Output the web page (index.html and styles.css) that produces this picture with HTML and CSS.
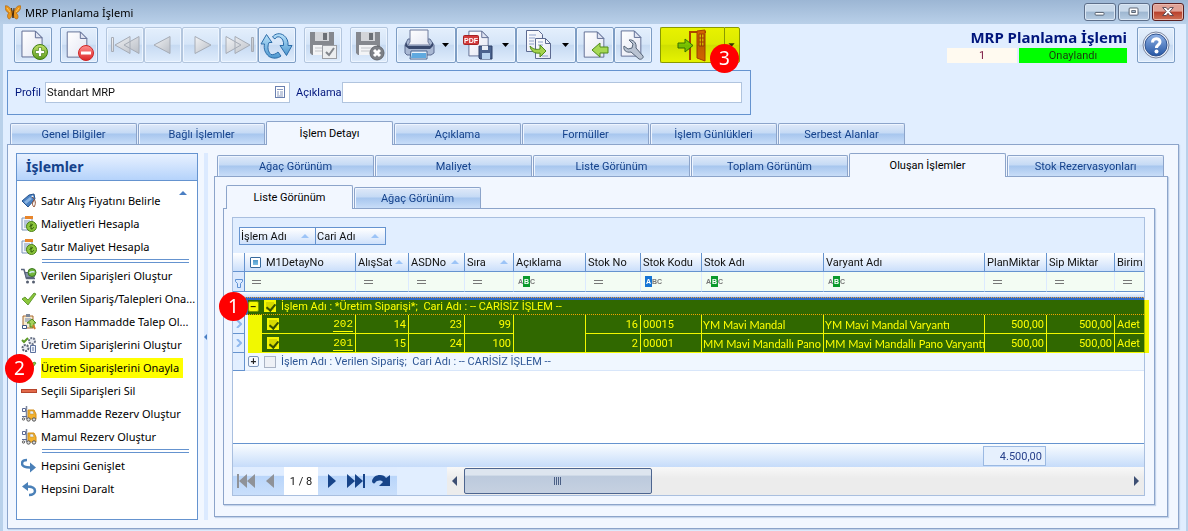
FILE: index.html
```html
<!DOCTYPE html>
<html lang="tr">
<head>
<meta charset="utf-8">
<title>MRP Planlama İşlemi</title>
<link rel="stylesheet" href="styles.css">
</head>
<body>
<svg class="defs" aria-hidden="true">
  <defs>
    <linearGradient id="gGreen" x1="0" y1="0" x2="0" y2="1"><stop offset="0" stop-color="#c3e26a"/><stop offset="1" stop-color="#5c9a1c"/></linearGradient>
    <linearGradient id="gRed" x1="0" y1="0" x2="0" y2="1"><stop offset="0" stop-color="#ff8f8f"/><stop offset="1" stop-color="#dd2525"/></linearGradient>
    <linearGradient id="gGray" x1="0" y1="0" x2="1" y2="1"><stop offset="0" stop-color="#f2f3f5"/><stop offset="1" stop-color="#b9bec6"/></linearGradient>
    <linearGradient id="gPage" x1="0" y1="0" x2="1" y2="1"><stop offset="0" stop-color="#ffffff"/><stop offset="1" stop-color="#e3e6f3"/></linearGradient>
    <linearGradient id="gBlue" x1="0" y1="0" x2="0" y2="1"><stop offset="0" stop-color="#b9e2fa"/><stop offset="1" stop-color="#4d97cf"/></linearGradient>
    <linearGradient id="gHelp" x1="0" y1="0" x2="0" y2="1"><stop offset="0" stop-color="#8fb2e6"/><stop offset="1" stop-color="#2556a4"/></linearGradient>
    <symbol id="page" viewBox="0 0 24 30"><path d="M1 1h14l7 7v20H1z" fill="url(#gPage)" stroke="#5c6a91"/><path d="M15 1v7h7z" fill="#dfe4f2" stroke="#5c6a91" stroke-linejoin="round"/></symbol>
    <symbol id="floppy" viewBox="0 0 30 30"><path d="M1 2h24v23H3l-2-2z" fill="#85888e"/><path d="M6 2h14v9H6z" fill="#d3d5d9"/><path d="M14 3h4v7h-4z" fill="#6c7076"/><path d="M4 15h18v10H4z" fill="#f3f4f6"/><path d="M6 18h14M6 21h14" stroke="#c2c5ca"/></symbol>
    <symbol id="money" viewBox="0 0 16 16"><path d="M1 2h10v12H1z" fill="#f4f7fc" stroke="#7d93b8"/><path d="M4 0h8v3H4z" fill="#e8862c"/><path d="M3 5h6M3 7h5M3 9h4M3 11h3" stroke="#7d93b8"/><circle cx="10.500" cy="10.500" r="5" fill="#8cc63c" stroke="#4b7f14"/><path d="M10 7.500v5.500c2 0 2.500-1 2.500-2M8.500 10.500l3.500-2" fill="none" stroke="#2f5a08"/></symbol>
    <symbol id="truck" viewBox="0 0 16 16"><path d="M7 4h6l2 4v5H7z" fill="#f3b22e" stroke="#d28d18"/><path d="M9 5h3l1 3H9z" fill="#e8f2fc" stroke="#b98a2a" stroke-width=".5"/><path d="M5.500 0v13" stroke="#7f889c" stroke-width="1.500"/><path d="M1.500 2.500h3v3h-3zM1 10.500h5" fill="#fff" stroke="#5c6a94"/><circle cx="7.500" cy="13.500" r="1.700" fill="#ddd" stroke="#555"/><circle cx="13" cy="13.500" r="1.700" fill="#ddd" stroke="#555"/><circle cx="2.500" cy="13" r="1.200" fill="#ddd" stroke="#666"/></symbol>
    <symbol id="check" viewBox="0 0 16 16"><path d="M1 8l3-2 3 3 6-7 2 1-8 11z" fill="#8cc63c" stroke="#4e8a1d" stroke-width=".8"/></symbol>
  </defs>
</svg>

<header class="titlebar">
  <svg class="logo" viewBox="0 0 16 15"><path d="M7 6C5 2 2 0 0 1c0 3 1 6 4 7-2 1-2 5 0 6 2 0 3-4 3.500-6C8 10 9 14 12 14c2-1 1-5-1-6 3-1 5-4 5-7-3-1-5 1-7 5z" fill="#e8951c" stroke="#a65f0d" stroke-width=".6"/><path d="M6.500 3l1.500 10 1-10" fill="none" stroke="#43280c"/><path d="M2 3l3 4M14 3l-3 4" stroke="#ffc857"/></svg>
  <h1 class="titlebar-text">MRP Planlama İşlemi</h1>
  <div class="win-buttons">
    <button class="win" aria-label="Küçült"><svg viewBox="0 0 32 18"><rect x="10.500" y="9.500" width="10" height="3" rx="1" fill="#fff" stroke="#4b5563"/></svg></button>
    <button class="win" aria-label="Büyüt"><svg viewBox="0 0 32 18"><rect x="10.500" y="4.500" width="10" height="8" rx="1" fill="#fff" stroke="#4b5563"/><rect x="13.500" y="7.500" width="4" height="2" fill="#b7c9df" stroke="#4b5563"/></svg></button>
    <button class="win win-close" aria-label="Kapat"><svg viewBox="0 0 32 18"><path d="M10 4h4l2 2.500L18 4h4l-4 4.500 4 4.500h-4l-2-2.500-2 2.500h-4l4-4.500z" fill="#fff" stroke="#50404b"/></svg></button>
  </div>
</header>

<main class="window">
  <div class="topline">
    <div class="toolbar">
      <button class="tool" aria-label="Yeni"><svg viewBox="0 0 36 34"><use href="#page" x="6" y="2" width="23" height="29"/><circle cx="25" cy="24" r="7.500" fill="url(#gGreen)" stroke="#3f7d12"/><path d="M23.500 19.500h3v3h3v3h-3v3h-3v-3h-3v-3h3z" fill="#fff" stroke="#4a8420" stroke-width=".7"/></svg></button>
      <button class="tool" aria-label="Sil"><svg viewBox="0 0 36 34"><use href="#page" x="5" y="3" width="23" height="28"/><circle cx="25" cy="25" r="7.500" fill="url(#gRed)" stroke="#cf2525"/><rect x="20" y="23.500" width="10" height="3" fill="#fff"/></svg></button>
      <div class="tool-group">
        <button class="tool off" aria-label="İlk" disabled><svg viewBox="0 0 36 34"><g fill="url(#gGray)" stroke="#a6acb6"><path d="M4.500 9.500h2v14h-2zM23 8.500v17L8 17zM32 8.500v17L17 17z"/></g></svg></button>
        <button class="tool off" aria-label="Önceki" disabled><svg viewBox="0 0 36 34"><path d="M25 8.500v17L9 17z" fill="url(#gGray)" stroke="#a6acb6"/></svg></button>
        <button class="tool off" aria-label="Sonraki" disabled><svg viewBox="0 0 36 34"><path d="M12 8.500v17L28 17z" fill="url(#gGray)" stroke="#a6acb6"/></svg></button>
        <button class="tool off" aria-label="Son" disabled><svg viewBox="0 0 36 34"><g fill="url(#gGray)" stroke="#a6acb6"><path d="M30.500 9.500h2v14h-2zM5 8.500v17L20 17zM14 8.500v17L29 17z"/></g></svg></button>
        <button class="tool" aria-label="Yenile"><svg viewBox="0 0 36 34"><path d="M12 26.500C9 24 8 19 10 14.500h3L7.500 6.500 2 16h3.500c-1 5 .5 9 4.500 12.500 4 2.500 9 2 12-.5l-3-4c-2 2-5 3-7 2.500z" fill="url(#gBlue)" stroke="#2c6ca8" stroke-linejoin="round"/><path d="M13.500 9C16 5.500 21 4.500 25 7.500c3 2.500 4.500 6 4 10H33l-5.500 10-6.500-10h3.500c.5-4-1-7.500-4-8.500-2-.5-3.500 0-4.500 2z" fill="url(#gBlue)" stroke="#2c6ca8" stroke-linejoin="round"/></svg></button>
      </div>
      <button class="tool off" aria-label="Kaydet ve onayla" disabled><svg viewBox="0 0 36 34"><use href="#floppy" x="4" y="2" width="30" height="30"/><rect x="17.500" y="17.500" width="14" height="13" fill="#eceef0" stroke="#9a9da3"/><path d="M21 24l3 3 5-7" fill="none" stroke="#82868c" stroke-width="2"/></svg></button>
      <button class="tool off" aria-label="Kaydet ve kapat" disabled><svg viewBox="0 0 36 34"><use href="#floppy" x="4" y="2" width="30" height="30"/><circle cx="26" cy="25" r="7" fill="#7d8086" stroke="#65686e"/><path d="M23 22l6 6M29 22l-6 6" stroke="#fff" stroke-width="3"/></svg></button>
      <div class="tool-group">
        <button class="tool wide" aria-label="Yazdır"><svg viewBox="0 0 58 34"><path d="M11 11l-3 6v8l2 2h24l3-2v-8l-4-6z" fill="#a9b8d3" stroke="#5d6d91"/><path d="M13 2h18v12l2 3H11l2-3z" fill="url(#gPage)" stroke="#6f7b9c"/><path d="M9 14l2 4h22l3-4v4l-3 3H12l-4-3z" fill="#39496e"/><path d="M14 23h16v8H13z" fill="#e9f3fd" stroke="#49658f"/><path d="M15 25h14v5H14z" fill="#5fa9df"/><path d="M45 15h7l-3.500 4z" fill="#000"/></svg></button>
        <button class="tool wide" aria-label="PDF kaydet"><svg viewBox="0 0 58 34"><use href="#page" x="11" y="2" width="22" height="28"/><rect x="6.500" y="7.500" width="15" height="9" rx="1" fill="#d33b3b" stroke="#a52222"/><path d="M22 18h13v13H23l-1-1z" fill="#4b638e" stroke="#2f4066"/><path d="M25 18h6v4h-6z" fill="#e8edf6"/><path d="M25 25h8v6h-8z" fill="#b8d3ef"/><path d="M45 15h7l-3.500 4z" fill="#000"/><text x="7" y="15" class="pdf-mark">PDF</text></svg></button>
        <button class="tool wide" aria-label="Kopyala"><svg viewBox="0 0 58 34"><path d="M9.500 2.500h12l4 4v17h-16z" fill="url(#gPage)" stroke="#5c6a91"/><path d="M12 7h7M12 10h6M12 13h5M12 16h5" stroke="#8fa2cb"/><path d="M18.500 10.500h10l5 5v15h-15z" fill="url(#gPage)" stroke="#5c6a91"/><path d="M28.500 10.500v5h5" fill="none" stroke="#5c6a91"/><path d="M21 14h5M21 17h5M25 28h6" stroke="#8fa2cb"/><path d="M13 18c3 3 6 4 10 3v-4l6 6-6 6v-4c-6 1-9-2-10-7z" fill="#a3d24b" stroke="#4f8a1b"/><path d="M45 15h7l-3.500 4z" fill="#000"/></svg></button>
        <button class="tool" aria-label="İçe aktar"><svg viewBox="0 0 36 34"><use href="#page" x="6" y="3" width="23" height="28"/><path d="M15 22l8-7v4h8v6h-8v4z" fill="#a6d855" stroke="#4f8a1b"/></svg></button>
        <button class="tool" aria-label="Ayarlar"><svg viewBox="0 0 36 34"><use href="#page" x="5" y="2" width="23" height="28"/><path d="M14 12l4 4-1 4-4 1-4-3c-1 4 2 7 7 6l8 7c2 1 5-1 4-3l-7-8c1-5-3-9-7-8z" fill="#b9c3d2" stroke="#566477"/></svg></button>
      </div>
      <div class="exit">
        <button class="tool exit-main" aria-label="Çıkış"><svg viewBox="0 0 62 34"><path d="M29 32V4h16" fill="none" stroke="#c04a14" stroke-width="2"/><path d="M36 3l8-1v31l-8-3z" fill="#ea6a20" stroke="#b8430f"/><path d="M38 6h5v12h-5zM40.500 6v12M38 10h5M38 14h5" fill="#f0c060" stroke="#b8430f"/><path d="M17 15h7v-4l8 6.500-8 6.500v-4h-7z" fill="#8fd83d" stroke="#3f7a12"/></svg></button>
        <button class="tool exit-drop" aria-label="Çıkış seçenekleri"><svg viewBox="0 0 16 34"><path d="M4 15h7l-3.500 4z" fill="#330"/></svg></button>
        <span class="bubble bubble-3">3</span>
      </div>
    </div>
    <div class="status">
      <h2 class="status-title">MRP Planlama İşlemi</h2>
      <div class="status-row"><span class="status-no">1</span><span class="status-state">Onaylandı</span></div>
    </div>
    <button class="tool help" aria-label="Yardım"><svg viewBox="0 0 36 34"><circle cx="18" cy="17" r="13" fill="#eef2fa" stroke="#7b869e"/><circle cx="18" cy="17" r="11" fill="url(#gHelp)" stroke="#30538f"/><path d="M14.500 14.500c0-5 7.500-5 7.500-.5 0 3-3.500 2.500-3.500 6" fill="none" stroke="#fff" stroke-width="3"/><circle cx="18.500" cy="23.500" r="2" fill="#fff"/></svg></button>
  </div>

  <form class="profile">
    <label class="label-profil" for="profil">Profil</label>
    <div class="field field-profil"><input id="profil" type="text" value="Standart MRP"><svg viewBox="0 0 11 13"><rect x=".5" y=".5" width="9" height="11" fill="#fff" stroke="#6a80b0"/><path d="M2 3.500h6M2 6h2M5 6h3M2 8h2M5 8h3M2 10h6" stroke="#8799bf"/></svg></div>
    <label class="label-aciklama" for="aciklama">Açıklama</label>
    <div class="field field-aciklama"><input id="aciklama" type="text"></div>
  </form>

  <nav class="tabs tabs-main">
    <button class="tab">Genel Bilgiler</button><button class="tab">Bağlı İşlemler</button><button class="tab active">İşlem Detayı</button><button class="tab">Açıklama</button><button class="tab">Formüller</button><button class="tab">İşlem Günlükleri</button><button class="tab">Serbest Alanlar</button>
  </nav>

  <section class="sheet sheet-main">
    <aside class="side">
      <h3 class="side-head">İşlemler</h3>
      <svg class="side-up" viewBox="0 0 8 4"><path d="M0 4l4-4 4 4z" fill="#4a7fc3"/></svg>
      <ul class="side-list">
        <li><a href="#"><svg viewBox="0 0 16 16"><path d="M1 8l7-6 5-1 1 5-7 8z" fill="#4a82c4" stroke="#28548c"/><path d="M3 9l6-5 2 2-6 5z" fill="#8ab4e2"/><circle cx="11.500" cy="3.500" r="1" fill="#fff"/><path d="M11 4c4 3 4 7 2 10-2-2-2-4 0-7" fill="none" stroke="#8e4e32"/></svg><span>Satır Alış Fiyatını Belirle</span></a></li>
        <li><a href="#"><svg><use href="#money"/></svg><span>Maliyetleri Hesapla</span></a></li>
        <li><a href="#"><svg><use href="#money"/></svg><span>Satır Maliyet Hesapla</span></a></li>
        <li class="rule"></li>
        <li><a href="#"><svg viewBox="0 0 16 16"><path d="M0 1.500h3l2.500 9H14" fill="none" stroke="#59647c" stroke-width="1.500"/><path d="M4 4.500h10l-1 5H5z" fill="#8290a8" stroke="#59647c"/><circle cx="11" cy="4.500" r="4" fill="#72b43c" stroke="#3d7a20"/><path d="M8.500 5c2-2 3-1 5-1" fill="none" stroke="#cde8f5" stroke-width="1.500"/><circle cx="6.500" cy="14" r="1.500" fill="#555e70"/><circle cx="12.500" cy="14" r="1.500" fill="#555e70"/></svg><span>Verilen Siparişleri Oluştur</span></a></li>
        <li><a href="#"><svg><use href="#check"/></svg><span>Verilen Sipariş/Talepleri Ona...</span></a></li>
        <li><a href="#"><svg viewBox="0 0 16 16"><path d="M2 2h10v12H2z" fill="#f6ead2" stroke="#a8682d"/><path d="M5 0h4v3H5z" fill="#7d8798"/><path d="M4 5h6M4 7h5" stroke="#6d85b0"/><path d="M6 9l5-4 4 4h-2v4H9V9z" fill="#a5d15c" stroke="#4f8a1b"/><path d="M1.500 11.500h4v3h-4z" fill="#fff" stroke="#3f5584"/><path d="M12 11l2 4" stroke="#d07b2b" stroke-width="2"/></svg><span>Fason Hammadde Talep Ol...</span></a></li>
        <li><a href="#"><svg viewBox="0 0 16 16"><circle cx="4.500" cy="11" r="3" fill="#e8ebf1" stroke="#5b6477" stroke-width="2" stroke-dasharray="2 1"/><circle cx="11" cy="4" r="3" fill="#e8ebf1" stroke="#6b7488" stroke-width="2" stroke-dasharray="2 1"/><path d="M1 3l2 2 4-4" fill="none" stroke="#5d9a25" stroke-width="2"/><path d="M9.500 8.500h5v7h-5zM11 11h2M11 13h2" fill="#eef3fb" stroke="#5c719e"/></svg><span>Üretim Siparişlerini Oluştur</span></a></li>
        <li class="marked"><a href="#"><svg><use href="#check"/></svg><span>Üretim Siparişlerini Onayla</span></a><span class="bubble bubble-2">2</span></li>
        <li><a href="#"><svg viewBox="0 0 16 16"><rect x=".5" y="6.500" width="15" height="3" fill="#e2694a" stroke="#b5452c"/></svg><span>Seçili Siparişleri Sil</span></a></li>
        <li><a href="#"><svg><use href="#truck"/></svg><span>Hammadde Rezerv Oluştur</span></a></li>
        <li><a href="#"><svg><use href="#truck"/></svg><span>Mamul Rezerv Oluştur</span></a></li>
        <li class="rule"></li>
        <li><a href="#"><svg viewBox="0 0 16 16"><path d="M6 2C2 2 1 4 1 5.500 1 8 4 9.500 9 9.500" fill="none" stroke="#4a80b8" stroke-width="2.500"/><path d="M9 4.500l6 5-6 5z" fill="#4a80b8"/></svg><span>Hepsini Genişlet</span></a></li>
        <li><a href="#"><svg viewBox="0 0 16 16"><path d="M6 5.500c5 0 8 1 8 4.500 0 2-2 4-6 4" fill="none" stroke="#4a80b8" stroke-width="2.500"/><path d="M7 1v9L1 5.500z" fill="#4a80b8"/></svg><span>Hepsini Daralt</span></a></li>
      </ul>
    </aside>
    <div class="splitter"><svg viewBox="0 0 3 6"><path d="M3 0v6L0 3z" fill="#4a7fc3"/></svg></div>

    <div class="detail">
      <nav class="tabs tabs-wide">
        <button class="tab">Ağaç Görünüm</button><button class="tab">Maliyet</button><button class="tab">Liste Görünüm</button><button class="tab">Toplam Görünüm</button><button class="tab active">Oluşan İşlemler</button><button class="tab">Stok Rezervasyonları</button>
      </nav>
      <section class="sheet sheet-mid">
        <nav class="tabs">
          <button class="tab active">Liste Görünüm</button><button class="tab">Ağaç Görünüm</button>
        </nav>
        <section class="sheet sheet-in">
          <div class="grid">
            <div class="groupbar">
              <button class="chip">İşlem Adı<i class="asc"></i></button><button class="chip">Cari Adı<i class="asc"></i></button>
            </div>
            <div class="rows">
              <table class="data">
                <colgroup><col class="w-ind"><col class="w-indent"><col class="w-id"><col class="w-as"><col class="w-asd"><col class="w-sira"><col class="w-ack"><col class="w-sno"><col class="w-skod"><col class="w-sadi"><col class="w-var"><col class="w-plan"><col class="w-sip"><col></colgroup>
                <thead>
                  <tr class="heads"><th></th><th colspan="2"><span class="th-id"><i class="allbox"></i>M1DetayNo</span></th><th>AlışSat<i class="asc"></i></th><th>ASDNo<i class="asc"></i></th><th>Sıra<i class="asc"></i></th><th>Açıklama</th><th>Stok No</th><th>Stok Kodu</th><th>Stok Adı</th><th>Varyant Adı</th><th>PlanMiktar</th><th>Sip Miktar</th><th>Birim</th></tr>
                  <tr class="filters"><td><svg class="funnel" viewBox="0 0 8 9"><path d="M.5.500h7v2l-2 2v4h-3v-4l-2-2z" fill="#dcebff" stroke="#5f92d4"/></svg></td><td colspan="2"><i class="eq"></i></td><td><i class="eq"></i></td><td><i class="eq"></i></td><td><i class="eq"></i></td><td><span class="abc">A<b>B</b>C</span></td><td><i class="eq"></i></td><td><span class="abc start"><b>A</b>BC</span></td><td><span class="abc">A<b>B</b>C</span></td><td><span class="abc">A<b>B</b>C</span></td><td><i class="eq"></i></td><td><i class="eq"></i></td><td><i class="eq"></i></td></tr>
                  <tr class="strip"><td colspan="14"></td></tr>
                </thead>
                <tbody>
                  <tr class="group selected"><td></td><td colspan="13"><div class="group-line"><button class="fold" aria-label="Daralt">−</button><input type="checkbox" checked aria-label="Grubu seç"><span>İşlem Adı : *Üretim Siparişi*;&nbsp; Cari Adı : -- CARİSİZ İŞLEM --</span></div></td></tr>
                  <tr class="item"><td class="ind"><svg viewBox="0 0 6 8"><path d="M1 0l4 4-4 4" fill="none" stroke="#8fb8ee" stroke-width="2"/></svg></td><td class="indent"></td><td><div class="id-cell"><input type="checkbox" checked aria-label="202"><a href="#">202</a></div></td><td class="num">14</td><td class="num">23</td><td class="num">99</td><td rowspan="2"></td><td class="num">16</td><td>00015</td><td class="name">YM Mavi Mandal</td><td class="name">YM Mavi Mandal Varyantı</td><td class="num">500,00</td><td class="num">500,00</td><td>Adet</td></tr>
                  <tr class="item"><td class="ind"><svg viewBox="0 0 6 8"><path d="M1 0l4 4-4 4" fill="none" stroke="#8fb8ee" stroke-width="2"/></svg></td><td class="indent"></td><td><div class="id-cell"><input type="checkbox" checked aria-label="201"><a href="#">201</a></div></td><td class="num">15</td><td class="num">24</td><td class="num">100</td><td class="num">2</td><td>00001</td><td class="name">MM Mavi Mandallı Pano</td><td class="name">MM Mavi Mandallı Pano Varyantı</td><td class="num">500,00</td><td class="num">500,00</td><td>Adet</td></tr>
                  <tr class="group"><td></td><td colspan="13"><div class="group-line"><button class="fold" aria-label="Genişlet">+</button><input type="checkbox" aria-label="Grubu seç"><span>İşlem Adı : Verilen Sipariş;&nbsp; Cari Adı : -- CARİSİZ İŞLEM --</span></div></td></tr>
                </tbody>
              </table>
              <div class="marker"></div>
              <span class="bubble bubble-1">1</span>
            </div>
            <div class="totals"><span class="total">4.500,00</span></div>
            <div class="pager">
              <div class="pager-nav">
                <button aria-label="İlk sayfa"><svg viewBox="0 0 20 16"><path d="M1 1h2v14H1zM11 1v14L3 8zM19 1v14l-8-7z" fill="#8f9298"/></svg></button>
                <button class="narrow" aria-label="Önceki sayfa"><svg viewBox="0 0 10 16"><path d="M9 1v14L1 8z" fill="#8f9298"/></svg></button>
                <span class="pager-pos">1 / 8</span>
                <button class="narrow" aria-label="Sonraki sayfa"><svg viewBox="0 0 10 16"><path d="M1 1v14l8-7z" fill="#174489"/></svg></button>
                <button aria-label="Son sayfa"><svg viewBox="0 0 20 16"><path d="M17 1h2v14h-2zM9 1v14l8-7zM1 1v14l8-7z" fill="#174489"/></svg></button>
                <button aria-label="Git"><svg viewBox="0 0 20 16"><path d="M1 8C2 4 5 2 9 2c3 0 5 1 6 3l4-3v11H8l4-4c-2-2-6-2-8 1-1 1-3 0-3-2z" fill="#174489"/></svg></button>
              </div>
              <div class="scroll">
                <svg viewBox="0 0 5 10"><path d="M5 0v10L0 5z" fill="#3d4f73"/></svg>
                <div class="thumb"><svg viewBox="0 0 8 8"><path d="M.5 0v8M2.500 0v8M4.500 0v8M6.500 0v8" stroke="#4a5f85"/></svg></div>
                <svg class="scroll-end" viewBox="0 0 5 10"><path d="M0 0v10l5-5z" fill="#3d4f73"/></svg>
              </div>
            </div>
          </div>
        </section>
      </section>
    </div>
  </section>
</main>
</body>
</html>
```
FILE: styles.css
```css
* { box-sizing: border-box; }

body {
  margin: 0;
  min-height: 100vh;
  display: flex;
  flex-direction: column;
  background: #b9d1ea;
  font: 11px/15px Tahoma, Roboto, sans-serif;
  color: #111;
}

button, input { font: inherit; color: inherit; margin: 0; }
button { padding: 0; }
h1, h2, h3, ul { margin: 0; padding: 0; }
svg { display: block; flex: none; }
a { color: inherit; text-decoration: none; }
.defs { position: absolute; width: 0; height: 0; }

/* title bar */
.titlebar {
  display: flex;
  height: 24px;
  padding-left: 5px;
  background: linear-gradient(#9cb6d4, #b9d0e9);
}
.logo { width: 16px; height: 15px; margin-top: 5px; }
.titlebar-text { flex: 1; margin-left: 4px; font: 11px/26px "Noto Sans", sans-serif; color: #000; }
.win-buttons { display: flex; gap: 2px; padding: 3px 4px 0 0; }
.win {
  width: 32px;
  height: 18px;
  border: 1px solid #5d6f8a;
  border-radius: 3px;
  background: linear-gradient(#c9d9ea 45%, #9db6d0 50%, #b7cde3);
  box-shadow: inset 0 0 0 1px #dbe7f4;
}
.win svg { width: 30px; height: 16px; }
.win-close { border-color: #5a1f20; background: linear-gradient(#e0a296 45%, #b8402c 50%, #cf7256); box-shadow: inset 0 0 0 1px #eab9ae; }

.window {
  flex: 1;
  display: flex;
  flex-direction: column;
  margin: 0 2px 0 3px;
  padding: 3px 7px 2px 4px;
  background: #e1eeff;
}

/* toolbar */
.topline { display: flex; height: 43px; padding: 0 4px 0 7px; }
.toolbar { display: flex; gap: 8px; align-items: flex-start; }
.tool-group { display: flex; }
.tool {
  width: 38px;
  height: 36px;
  border: 1px solid #7d9dc4;
  border-radius: 2px;
  background: linear-gradient(#e4effc, #d5e5f8 48%, #c6daf2 50%, #dfecfc);
  box-shadow: inset 0 0 0 1px #edf5ff;
}
.tool svg { width: 36px; height: 34px; }
.tool.wide { width: 60px; }
.tool.wide svg { width: 58px; }
.tool.off { border-color: #b3c6de; }
.pdf-mark { font: bold 7px "Liberation Sans", sans-serif; fill: #fff; }
.exit { position: relative; display: flex; }
.exit .tool { border-color: #8a9a00; background: linear-gradient(#e8f200, #dcea00 48%, #cfdf00 50%, #e6f300); box-shadow: none; }
.exit .exit-main { width: 64px; border-right: 0; border-radius: 2px 0 0 2px; }
.exit .exit-main svg { width: 62px; mix-blend-mode: multiply; }
.exit .exit-drop { width: 16px; border-radius: 0 2px 2px 0; }
.exit .exit-drop svg { width: 14px; }

.bubble {
  position: absolute;
  z-index: 3;
  width: 29px;
  height: 29px;
  border-radius: 50%;
  background: #f00;
  color: #fff;
  font: 19px/29px "Noto Sans", sans-serif;
  text-align: center;
}
.bubble-3 { left: 50px; top: 17px; }
.bubble-2 { left: -12px; top: -2px; }
.bubble-1 { left: -14px; top: 39px; }

.status { margin-left: auto; width: 180px; }
.status-title { font: bold 15px/21px "Noto Sans", sans-serif; color: #00157c; text-align: right; white-space: nowrap; }
.status-row { display: flex; gap: 2px; height: 15px; line-height: 16px; text-align: center; color: #1b3a10; }
.status-no { width: 70px; background: #fffaf0; color: #7a1640; }
.status-state { flex: 1; background: #0f0; }
.help { margin-left: 10px; }

/* profile */
.profile {
  display: flex;
  align-items: center;
  width: 744px;
  height: 45px;
  padding: 0 8px 0 7px;
  border: 1px solid #6593cf;
  color: #00157c;
}
.label-profil { width: 30px; }
.label-aciklama { width: 46px; }
.field { display: flex; align-items: center; height: 21px; border: 1px solid #b0c4de; background: #fff; color: #111; }
.field input { flex: 1; min-width: 0; height: 19px; border: 0; padding: 0 1px; background: none; outline: 0; }
.field svg { width: 11px; height: 13px; margin-right: 3px; }
.field-profil { width: 245px; margin-right: 6px; }
.field-aciklama { flex: 1; }

/* tabs */
.tabs { display: flex; align-items: flex-end; gap: 1px; height: 23px; padding-left: 3px; }
.tab {
  width: 127px;
  height: 21px;
  border: 1px solid #8ca4ca;
  border-bottom: 0;
  border-radius: 2px 2px 0 0;
  background: linear-gradient(#dfe9f8, #c5daf5 45%, #a7c6ee 50%, #c8ddf8);
  box-shadow: inset 1px 1px 0 #eef5ff;
  color: #15428b;
}
.tab.active { position: relative; height: 24px; margin-bottom: -1px; background: #f2f7ff; box-shadow: none; color: #000; }
.tabs-main { margin-top: 6px; }
.tabs-wide .tab { width: 157px; }

.sheet { border: 1px solid #8ca4ca; background: #f2f7ff; box-shadow: 1px 1px 1px #c3d3ea; }
.sheet-main { flex: 1; display: flex; padding: 8px 10px 8px 8px; }

/* side panel */
.side { position: relative; width: 182px; border: 1px solid #6593cf; background: #fff; }
.side-head {
  height: 27px;
  padding-left: 9px;
  border-bottom: 1px solid #6593cf;
  background: linear-gradient(#e8f1ff, #b5d3fb);
  color: #15428b;
  font: bold 14px/26px "Noto Sans", sans-serif;
}
.side-up { position: absolute; right: 10px; top: 37px; width: 8px; height: 4px; }
.side-list { list-style: none; padding-top: 8px; font: 11px/23px "Noto Sans", sans-serif; color: #000; }
.side-list li { position: relative; height: 23px; padding-left: 4px; }
.side-list a { display: flex; align-items: center; gap: 4px; height: 23px; white-space: nowrap; }
.side-list svg { width: 16px; height: 16px; }
.side-list .rule { height: 4px; margin: 1px 8px 1px 25px; padding: 0; border: solid #6593cf; border-width: 1px 0; }
.marked a span { flex: none; height: 20px; line-height: 20px; padding-right: 4px; background: #ff0; }
.splitter { display: flex; align-items: center; width: 4px; margin: 0 6px 0 6px; background: #dceaff; }
.splitter svg { width: 3px; height: 6px; }

/* detail area */
.detail { flex: 1; min-width: 0; display: flex; flex-direction: column; padding-bottom: 3px; }
.sheet-mid, .sheet-in { flex: 1; display: flex; flex-direction: column; }
.sheet-mid { padding: 8px 12px 11px 8px; }
.sheet-in { padding: 8px 9px 8px 8px; }
.grid { flex: 1; display: flex; flex-direction: column; border: 1px solid #a9bfdf; background: #e1eeff; }
.groupbar { display: flex; height: 35px; padding: 9px 0 0 6px; }
.chip { display: flex; align-items: center; justify-content: space-between; width: 77px; height: 18px; padding: 0 6px 0 1px; border: 1px solid #6593cf; background: linear-gradient(#fff, #cfe1fb); }
.chip + .chip { width: 70px; border-left: 0; }
.asc { flex: none; width: 0; height: 0; border: solid transparent; border-width: 0 4px 4px; border-bottom-color: #9cc4f7; }

.rows { position: relative; flex: 1; background: #fff; }
.data { width: 100%; table-layout: fixed; border-collapse: separate; border-spacing: 0; }
.data th, .data td { padding: 0 2px; overflow: hidden; white-space: nowrap; font-weight: normal; text-align: left; border: solid #6593cf; border-width: 0 1px 1px 0; }
.data th:last-child, .data td:last-child { border-right: 0; }
.w-ind { width: 12px; } .w-indent { width: 17px; } .w-id { width: 94px; } .w-as { width: 53px; }
.w-asd { width: 56px; } .w-sira { width: 49px; } .w-ack { width: 72px; } .w-sno { width: 55px; }
.w-skod { width: 61px; } .w-sadi { width: 122px; } .w-var { width: 161px; } .w-plan { width: 62px; } .w-sip { width: 68px; }
.data .heads th { position: relative; height: 19px; background: linear-gradient(#fff, #cbdffb); }
.heads .asc { position: absolute; right: 5px; top: 7px; }
.th-id { display: flex; align-items: center; gap: 5px; padding-left: 3px; }
.allbox { width: 11px; height: 11px; border: 1px solid #37699c; border-radius: 1px; background: linear-gradient(#3f86bd, #8fd0f0); box-shadow: inset 0 0 0 2px #fff; }
.data .filters td { height: 20px; background: #f3fcf3; border-right-color: #dceaff; padding: 0 0 0 8px; }
.data .filters td:first-child { background: #dbe9fd; border-right-color: #6593cf; padding: 4px 0 0 2px; }
.funnel { width: 8px; height: 9px; }
.eq { display: block; width: 9px; height: 4px; border: solid #777; border-width: 1px 0; }
.data .filters td:nth-child(2) { padding-left: 7px; }
.abc { display: flex; align-items: center; margin-left: -4px; font: bold 7px/11px "Liberation Sans", sans-serif; color: #777; }
.abc b { width: 7px; background: #0c9a2c; color: #fff; text-align: center; }
.abc.start b { background: #1474d4; }
.data .strip td { height: 5px; padding: 0; border: 0; background: linear-gradient(#fff, #c9ddfa); }

.data .group td { height: 18px; background: #f0f7ff; border-color: #d8e6fa; color: #2f5796; }
.data .group td:first-child { background: #e3efff; border-color: #6593cf; }
.group-line { display: flex; align-items: center; gap: 5px; padding-left: 1px; }
.fold { flex: none; width: 11px; height: 11px; border: 1px solid #7b95ba; border-radius: 2px; background: #f4f8ff; font: bold 10px/9px "Liberation Sans", sans-serif; color: #222; }
.data input { appearance: none; flex: none; width: 12px; height: 12px; border: 1px solid #a9b3c4; background: #eef1f6; }
.data input:checked { border: 2px solid #f4f6f8; background: #d6d9de; }
.data input:checked::before { content: ""; display: block; width: 4px; height: 7px; margin: 0 0 0 2px; border: solid #35506e; border-width: 0 2px 2px 0; transform: rotate(40deg); }
.data .selected td:last-child { background: #3068c5; border-top: 1px dotted #f2a33a; border-bottom: 1px dotted #f2a33a; color: #fff; }
.data .item td { height: 19px; padding-right: 0; background: #3068c5; border-color: #f1f8ff; color: #fff; }
.data .item td.name { padding-left: 1px; font-family: Tahoma, Lato, sans-serif; }
.data .item td.ind { padding: 0 0 0 3px; background: #e3efff; border-color: #6593cf; }
.data .item td.indent { background: #f1f8ff; }
.ind svg { width: 6px; height: 8px; }
.data .item td.num { padding-right: 2px; text-align: right; }
.id-cell { display: flex; align-items: center; justify-content: space-between; padding: 0 2px 0 3px; }
.id-cell a { font: 11px/14px "Liberation Mono", monospace; border-bottom: 1px solid #fff; }
/* highlighter over the selected rows */
.marker { position: absolute; left: 15px; right: -5px; top: 47px; height: 53px; background: #ff0; mix-blend-mode: multiply; }

.totals { display: flex; height: 24px; padding: 2px 98px 1px 0; border-top: 1px solid #6593cf; background: linear-gradient(#fafdff, #c6dcfa); }
.total { width: 63px; margin-left: auto; padding-right: 3px; border: 1px solid #9bb9e2; background: #e6f0fd; text-align: right; line-height: 19px; color: #27408b; }
.pager { display: flex; height: 28px; }
.pager-nav { display: flex; align-items: center; gap: 5px; width: 164px; padding-left: 3px; background: linear-gradient(#e0edff 30%, #b9d5fa 32%, #c9dffb); }
.pager-nav button { border: 0; background: none; }
.pager-nav svg { width: 20px; height: 16px; }
.pager-nav .narrow { margin: 0 4px; }
.pager-nav .narrow svg { width: 10px; }
.pager-pos { width: 34px; height: 28px; background: #fff; line-height: 29px; text-align: center; }
.scroll { flex: 1; display: flex; align-items: center; margin-left: 50px; padding: 0 5px; background: linear-gradient(#f8f8f8, #ececec 40%); }
.scroll > svg { width: 5px; height: 10px; }
.scroll-end { margin-left: auto; }
.thumb { display: flex; align-items: center; justify-content: center; width: 188px; height: 26px; margin-left: 7px; border: 1px solid #4d658f; border-radius: 2px; background: linear-gradient(#dde5ef 25%, #bccadd 30%, #c6d1e1); }
.thumb svg { width: 8px; height: 8px; }
```
